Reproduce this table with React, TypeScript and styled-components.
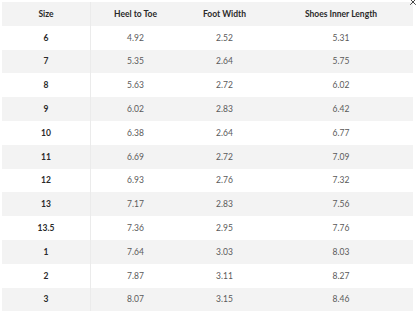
import styled, { createGlobalStyle } from "styled-components";
import { X } from "lucide-react";

const rows = [
  ["6", "4.92", "2.52", "5.31"],
  ["7", "5.35", "2.64", "5.75"],
  ["8", "5.63", "2.72", "6.02"],
  ["9", "6.02", "2.83", "6.42"],
  ["10", "6.38", "2.64", "6.77"],
  ["11", "6.69", "2.72", "7.09"],
  ["12", "6.93", "2.76", "7.32"],
  ["13", "7.17", "2.83", "7.56"],
  ["13.5", "7.36", "2.95", "7.76"],
  ["1", "7.64", "3.03", "8.03"],
  ["2", "7.87", "3.11", "8.27"],
  ["3", "8.07", "3.15", "8.46"],
];

const headers = ["Size", "Heel to Toe", "Foot Width", "Shoes Inner Length"];

export default function App() {
  return (
    <>
      <GlobalStyle />
      <Modal>
        <CloseButton aria-label="close">
          <X size={10} strokeWidth={2} />
        </CloseButton>
        <Table>
          <Row $shaded>
            {headers.map((h, i) => (
              <Cell key={h} $first={i === 0} $head>
                {h}
              </Cell>
            ))}
          </Row>
          {rows.map((r, ri) => (
            <Row key={r[0]} $shaded={ri % 2 === 1}>
              {r.map((v, i) => (
                <Cell key={i} $first={i === 0} $head={i === 0}>
                  {v}
                </Cell>
              ))}
            </Row>
          ))}
        </Table>
      </Modal>
    </>
  );
}

const GlobalStyle = createGlobalStyle`
  body {
    margin: 0;
    background: #fff;
    font-family: Lato, "Open Sans", sans-serif;
  }
`;

const Modal = styled.div`
  position: relative;
  width: 416px;
  height: 311px;
  padding: 2px 3px 0 2px;
  box-sizing: border-box;
  overflow: hidden;
`;

const CloseButton = styled.div`
  position: absolute;
  top: -3px;
  right: -2px;
  color: #222;
  display: flex;
`;

const Table = styled.div`
  display: flex;
  flex-direction: column;
  width: 411px;
`;

const Row = styled.div<{ $shaded?: boolean }>`
  display: grid;
  grid-template-columns: 89px 89px 89px 144px;
  height: 23.8px;
  background: ${({ $shaded }) => ($shaded ? "#f3f3f3" : "#fff")};
`;

const Cell = styled.div<{ $first?: boolean; $head?: boolean }>`
  display: flex;
  align-items: center;
  justify-content: center;
  font-size: 8.5px;
  font-weight: ${({ $head }) => ($head ? 700 : 400)};
  color: ${({ $head }) => ($head ? "#2a2a2a" : "#5a5a5a")};
  border-right: ${({ $first }) => ($first ? "1px solid #ebebeb" : "none")};
`;
